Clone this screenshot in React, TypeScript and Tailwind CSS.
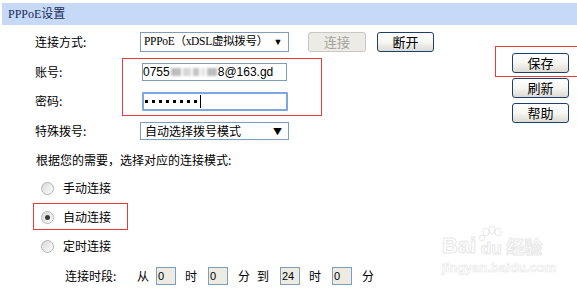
import React from "react";

const cjk = '"Noto Sans CJK SC", "Noto Sans", sans-serif';
const serifCjk = '"Liberation Serif", "Noto Sans CJK SC", serif';

function Btn({ label, disabled }: { label: string; disabled?: boolean }) {
  return (
    <div
      className={
        disabled
          ? "flex h-[20px] w-[58px] items-center justify-center rounded-[3px] border border-[#c9c8c0] bg-[#ecebe5] text-[13px] text-[#a3a39b]"
          : "flex h-[20px] w-[57px] items-center justify-center rounded-[3px] border border-[#1e3f6d] bg-gradient-to-b from-white via-[#f6f6f3] to-[#dcdcd3] text-[13px] text-black"
      }
      style={{ fontFamily: cjk }}
    >
      {label}
    </div>
  );
}

function Radio({ checked }: { checked?: boolean }) {
  return (
    <div className="flex h-[13px] w-[13px] items-center justify-center rounded-full border border-[#b4b4b4] bg-gradient-to-br from-[#d8d8d8] to-white">
      {checked && <div className="h-[5px] w-[5px] rounded-full bg-[#3a3a3a]" />}
    </div>
  );
}

function TimeBox({ v }: { v: string }) {
  return (
    <div
      className="flex h-[18px] w-[20px] items-center border border-[#7f9db9] bg-[#ecebe4] pl-[1px] text-[11px] text-black"
      style={{ fontFamily: '"Liberation Sans", sans-serif' }}
    >
      {v}
    </div>
  );
}

export default function App() {
  return (
    <div
      className="relative h-[290px] w-[577px] overflow-hidden bg-white text-[12px] text-black"
      style={{ fontFamily: cjk }}
    >
      {/* header */}
      <div className="ml-[2px] mt-[3px] flex h-[22px] items-center bg-[#c6d9f6] pl-[6px] text-[12px] text-[#1a2d5a]" style={{ fontFamily: serifCjk }}>
        PPPoE设置
      </div>

      <div className="flex">
        {/* left */}
        <div className="flex w-[512px] flex-col">
          {/* row 1 */}
          <div className="mt-[7px] flex h-[20px] items-center">
            <div className="w-[140px] pl-[35px]">连接方式:</div>
            <div
              className="flex h-[20px] w-[149px] items-center justify-between border border-[#7f9db9] bg-white pl-[3px] pr-[6px] text-[11.5px] tracking-[-0.3px] text-black"
              style={{ fontFamily: serifCjk }}
            >
              <span>PPPoE（xDSL虚拟拨号）</span>
              <span className="text-[9px] leading-none">▼</span>
            </div>
            <div className="ml-[19px]">
              <Btn label="连接" disabled />
            </div>
            <div className="ml-[11px]">
              <Btn label="断开" />
            </div>
          </div>

          {/* row 2 */}
          <div className="mt-[11px] flex h-[18px] items-center">
            <div className="w-[142px] pl-[35px]">账号:</div>
            <div className="flex h-[18px] w-[145px] items-center border border-[#7f9db9] bg-white text-[12px]" style={{ fontFamily: '"Liberation Sans", sans-serif' }}>
              <span>0755</span>
              <span className="mx-[1px] flex h-[10px] items-center gap-[2px] blur-[1.2px]">
                <span className="h-[8px] w-[10px] bg-[#bdbdbd]" />
                <span className="h-[8px] w-[8px] bg-[#d6d6d6]" />
                <span className="h-[8px] w-[6px] bg-[#c4c4c4]" />
                <span className="h-[8px] w-[4px] bg-[#e4e4e4]" />
                <span className="h-[8px] w-[10px] bg-[#bcbcbc]" />
              </span>
              <span>8@163.gd</span>
            </div>
          </div>

          {/* row 3 */}
          <div className="mt-[11px] flex h-[18px] items-center">
            <div className="w-[142px] pl-[35px]">密码:</div>
            <div className="flex h-[19px] w-[146px] items-center gap-[4px] rounded-[1px] border-2 border-[#7ea6e2] bg-white pl-[1px]">
              {Array.from({ length: 8 }).map((_, i) => (
                <span key={i} className="h-[3px] w-[3px] bg-black" />
              ))}
              <span className="ml-[-1px] h-[13px] w-[1px] bg-black" />
            </div>
          </div>

          {/* row 4 */}
          <div className="mt-[12px] flex h-[18px] items-center">
            <div className="w-[140px] pl-[35px]">特殊拨号:</div>
            <div className="flex h-[18px] w-[149px] items-center justify-between border border-[#7f9db9] bg-white pl-[4px] pr-[6px] text-[12px]">
              <span>自动选择拨号模式</span>
              <span className="text-[9px] leading-none">▼</span>
            </div>
          </div>

          <div className="mt-[12px] flex h-[16px] items-center pl-[36px]">根据您的需要，选择对应的连接模式:</div>

          <div className="mt-[12px] flex h-[16px] items-center gap-[9px] pl-[41px]">
            <Radio />
            <span>手动连接</span>
          </div>
          <div className="mt-[13px] flex h-[16px] items-center gap-[9px] pl-[41px]">
            <Radio checked />
            <span>自动连接</span>
          </div>
          <div className="mt-[13px] flex h-[16px] items-center gap-[9px] pl-[41px]">
            <Radio />
            <span>定时连接</span>
          </div>

          <div className="mt-[13px] flex h-[18px] items-center pl-[65px]">
            <span className="w-[72px]">连接时段:</span>
            <span className="w-[19px]">从</span>
            <TimeBox v="0" />
            <span className="ml-[9px] w-[23px]">时</span>
            <TimeBox v="0" />
            <span className="ml-[10px] w-[19px]">分</span>
            <span className="w-[23px]">到</span>
            <TimeBox v="24" />
            <span className="ml-[9px] w-[23px]">时</span>
            <TimeBox v="0" />
            <span className="ml-[10px]">分</span>
          </div>
        </div>

        {/* right */}
        <div className="flex flex-col gap-[5px] pt-[28px]">
          <Btn label="保存" />
          <Btn label="刷新" />
          <Btn label="帮助" />
        </div>
      </div>

      {/* red annotation boxes */}
      <div className="pointer-events-none absolute left-[122px] top-[58px] h-[58px] w-[200px] border border-[#e83a3a]" />
      <div className="pointer-events-none absolute left-[495px] top-[46px] h-[31px] w-[90px] border border-[#e83a3a]" />
      <div className="pointer-events-none absolute left-[33px] top-[203px] h-[27px] w-[95px] border border-[#e83a3a]" />

      {/* watermark */}
      <div className="pointer-events-none absolute left-[442px] top-[226px] flex flex-col items-start text-white" style={{ fontFamily: '"Liberation Sans", "Noto Sans CJK SC", sans-serif' }}>
        <div className="flex items-end">
          <span className="text-[22px] font-bold leading-none [-webkit-text-stroke:1px_#e8e8e8]">Bai</span>
          <span className="relative ml-[2px] flex flex-col items-center">
            <svg width="26" height="16" viewBox="0 0 26 16" className="mb-[-2px]">
              <g fill="white" stroke="#e8e8e8" strokeWidth="1">
                <ellipse cx="8" cy="6" rx="3" ry="4" />
                <ellipse cx="14" cy="4" rx="3" ry="4" />
                <ellipse cx="20" cy="6" rx="3" ry="4" />
                <ellipse cx="4" cy="12" rx="2.5" ry="3" />
              </g>
            </svg>
            <span className="text-[17px] font-bold leading-none [-webkit-text-stroke:1px_#e8e8e8]">du</span>
          </span>
          <span className="ml-[2px] text-[18px] font-bold leading-none [-webkit-text-stroke:1px_#e8e8e8]">经验</span>
        </div>
        <span className="mt-[4px] text-[13px] font-bold leading-none [-webkit-text-stroke:0.6px_#e8e8e8]">jingyan.baidu.com</span>
      </div>
    </div>
  );
}
